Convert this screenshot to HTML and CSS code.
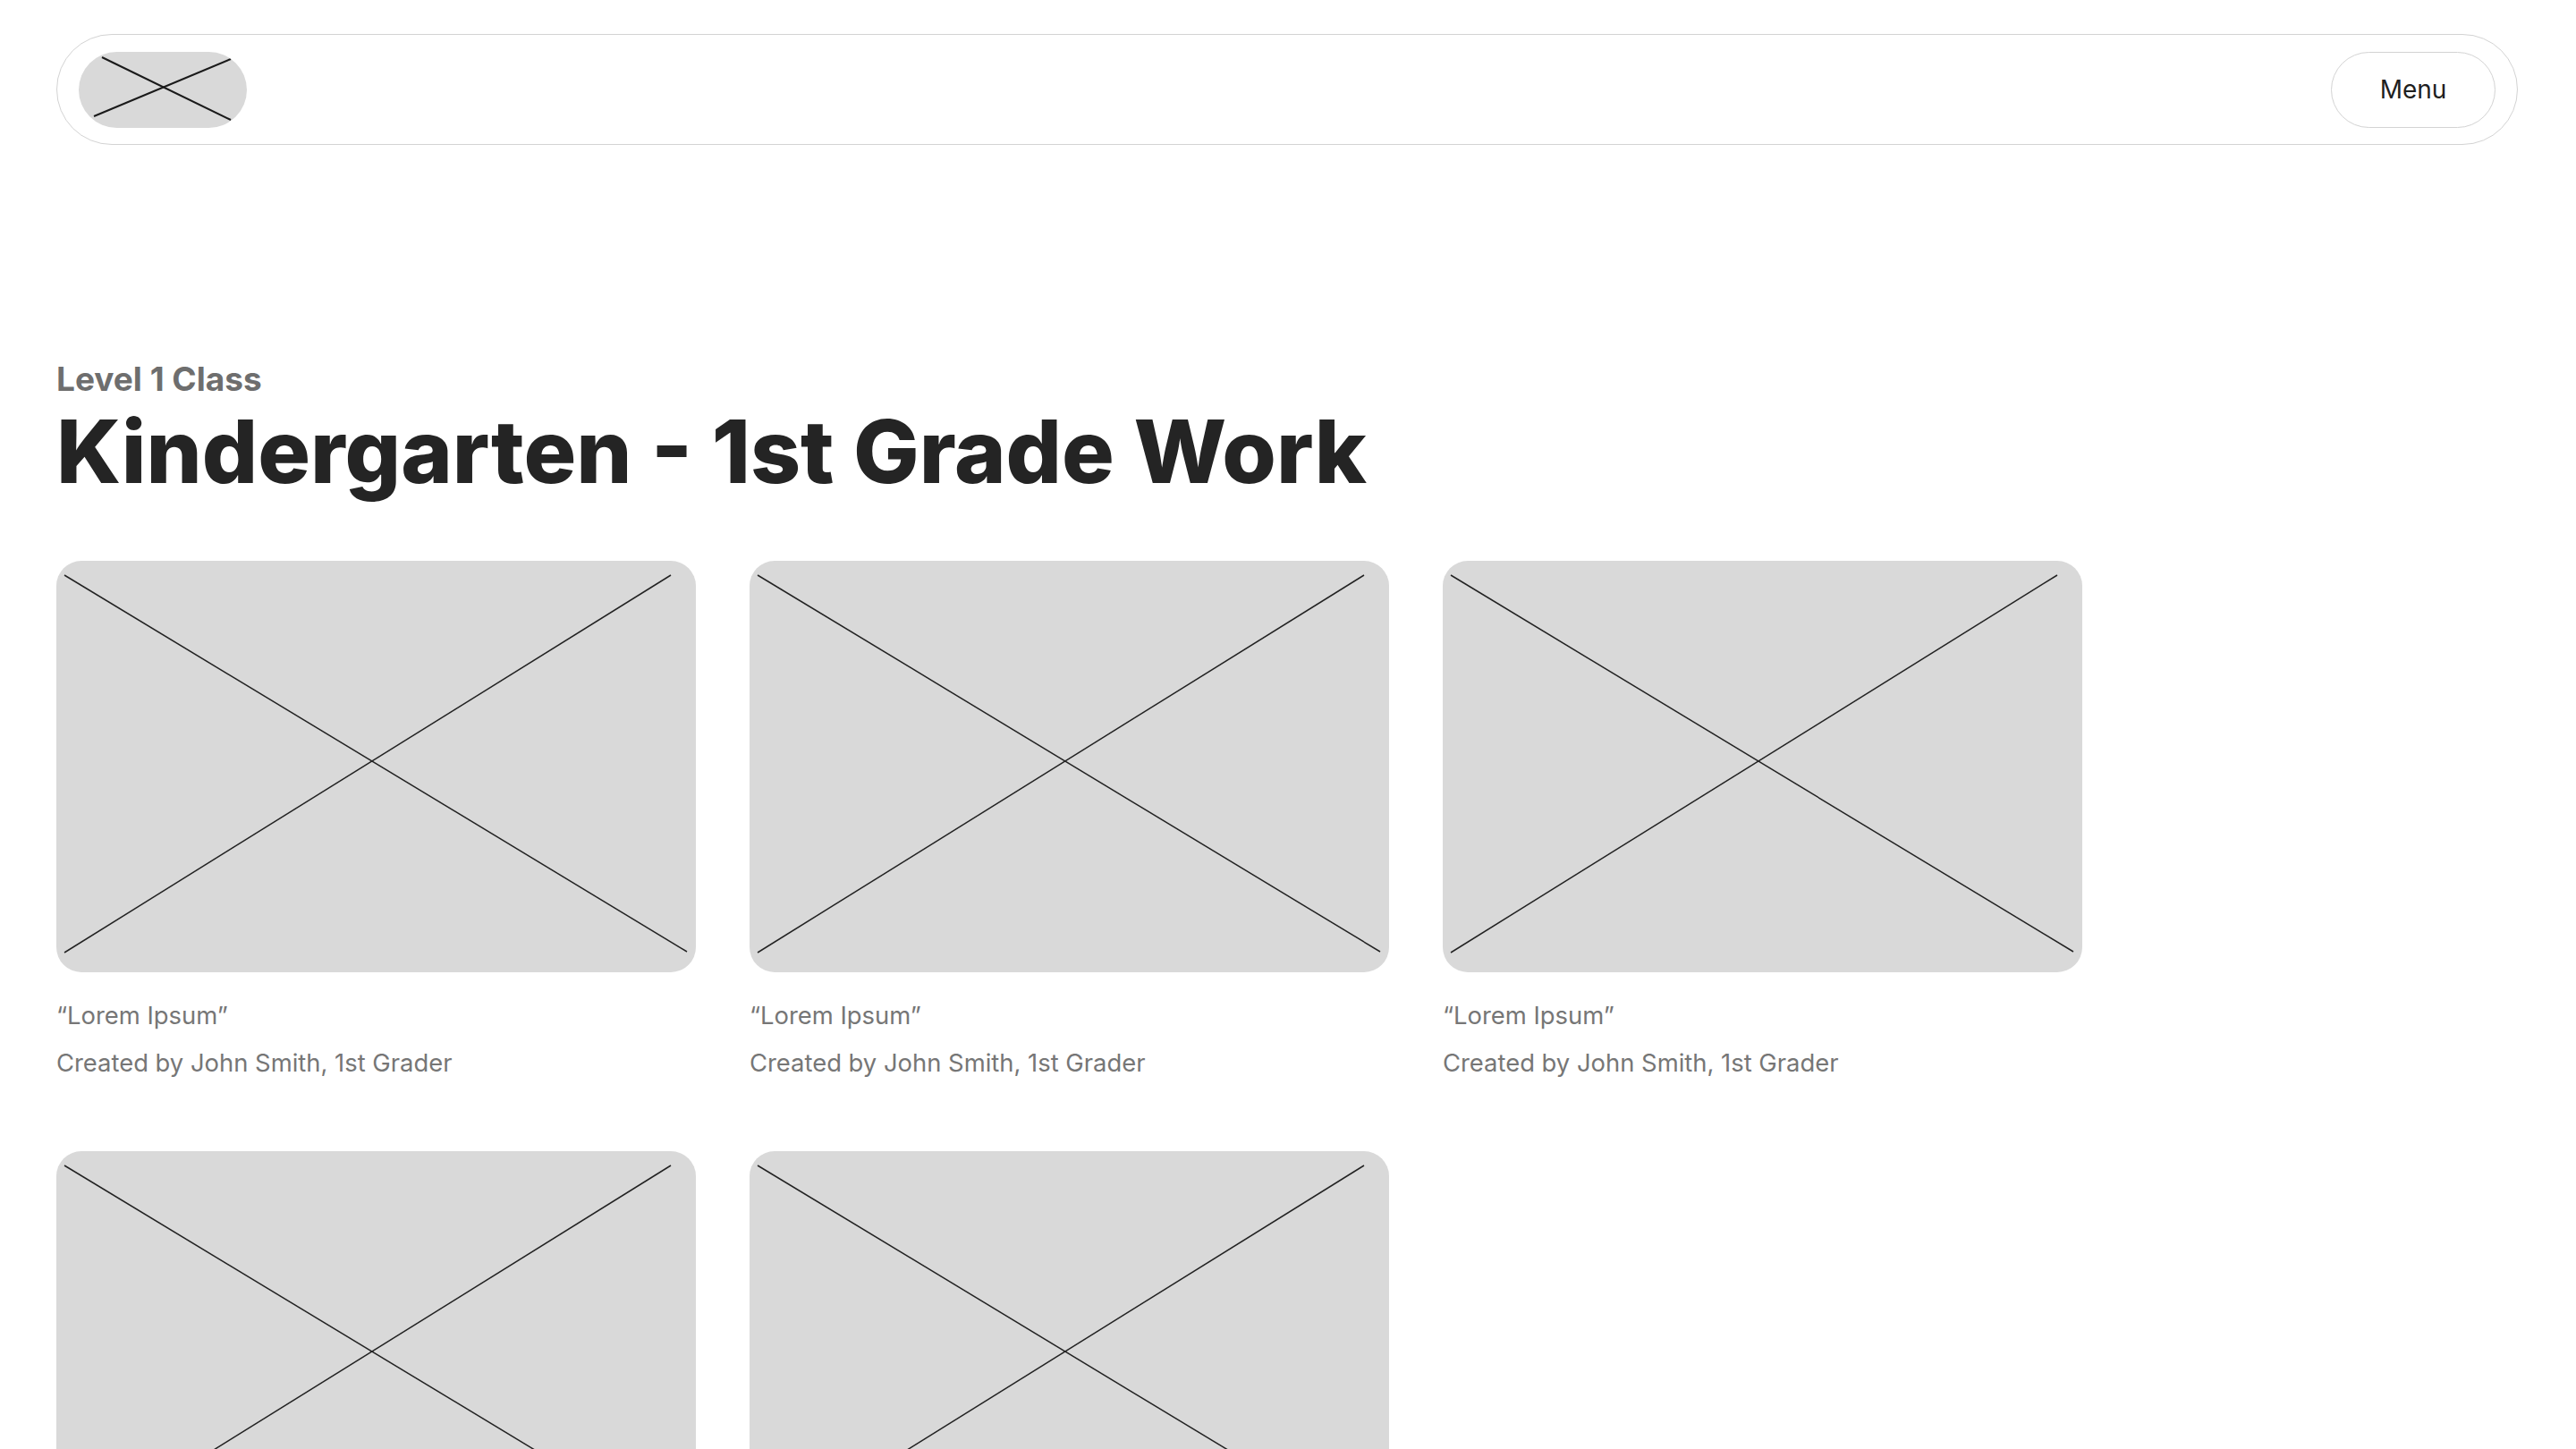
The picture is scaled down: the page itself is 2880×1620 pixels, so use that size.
FILE: index.html
```html
<!DOCTYPE html>
<html lang="en">
<head>
<meta charset="utf-8">
<title>Kindergarten - 1st Grade Work</title>
<link rel="stylesheet" href="styles.css">
</head>
<body>
<div class="page">
  <header class="topbar">
    <div class="logo">
      <svg viewBox="0 0 188 85" preserveAspectRatio="none" aria-hidden="true">
        <line x1="26" y1="6" x2="170" y2="76"/>
        <line x1="17" y1="72" x2="170" y2="8"/>
      </svg>
    </div>
    <button class="menu-btn">Menu</button>
  </header>

  <main class="content">
    <p class="eyebrow">Level 1 Class</p>
    <h1 class="title">Kindergarten - 1st Grade Work</h1>

    <section class="grid">
      <article class="card">
        <div class="thumb">
          <svg viewBox="0 0 715 460" preserveAspectRatio="none" aria-hidden="true">
            <line x1="9" y1="16" x2="705" y2="437"/>
            <line x1="687" y1="16" x2="9" y2="438"/>
          </svg>
        </div>
        <p class="caption">“Lorem Ipsum”</p>
        <p class="caption">Created by John Smith, 1st Grader</p>
      </article>
      <article class="card">
        <div class="thumb">
          <svg viewBox="0 0 715 460" preserveAspectRatio="none" aria-hidden="true">
            <line x1="9" y1="16" x2="705" y2="437"/>
            <line x1="687" y1="16" x2="9" y2="438"/>
          </svg>
        </div>
        <p class="caption">“Lorem Ipsum”</p>
        <p class="caption">Created by John Smith, 1st Grader</p>
      </article>
      <article class="card">
        <div class="thumb">
          <svg viewBox="0 0 715 460" preserveAspectRatio="none" aria-hidden="true">
            <line x1="9" y1="16" x2="705" y2="437"/>
            <line x1="687" y1="16" x2="9" y2="438"/>
          </svg>
        </div>
        <p class="caption">“Lorem Ipsum”</p>
        <p class="caption">Created by John Smith, 1st Grader</p>
      </article>
      <article class="card">
        <div class="thumb">
          <svg viewBox="0 0 715 460" preserveAspectRatio="none" aria-hidden="true">
            <line x1="9" y1="16" x2="705" y2="437"/>
            <line x1="687" y1="16" x2="9" y2="438"/>
          </svg>
        </div>
        <p class="caption">“Lorem Ipsum”</p>
        <p class="caption">Created by John Smith, 1st Grader</p>
      </article>
      <article class="card">
        <div class="thumb">
          <svg viewBox="0 0 715 460" preserveAspectRatio="none" aria-hidden="true">
            <line x1="9" y1="16" x2="705" y2="437"/>
            <line x1="687" y1="16" x2="9" y2="438"/>
          </svg>
        </div>
        <p class="caption">“Lorem Ipsum”</p>
        <p class="caption">Created by John Smith, 1st Grader</p>
      </article>
    </section>
  </main>
</div>
</body>
</html>
```

FILE: styles.css
```css
* { box-sizing: border-box; }

html, body {
  margin: 0;
  padding: 0;
  background: #ffffff;
  font-family: Inter, "Noto Sans", "Liberation Sans", sans-serif;
  color: #242424;
}

.page {
  padding: 38px 65px 0 63px;
}

.topbar {
  height: 124px;
  border: 1px solid #d3d3d3;
  border-radius: 62px;
  padding: 18px 24px 18px 24px;
  display: flex;
  align-items: center;
  justify-content: space-between;
}

.logo {
  width: 188px;
  height: 85px;
  border-radius: 43px;
  background: #d9d9d9;
  overflow: hidden;
}

.logo svg {
  display: block;
  width: 100%;
  height: 100%;
}

.logo line {
  stroke: #1a1a1a;
  stroke-width: 2;
}

.menu-btn {
  width: 184px;
  height: 85px;
  border: 1px solid #d3d3d3;
  border-radius: 43px;
  background: #ffffff;
  font-family: Inter, "Noto Sans", "Liberation Sans", sans-serif;
  font-size: 28px;
  font-weight: 400;
  color: #1f1f1f;
  padding: 0;
}

.content {
  padding-top: 241px;
}

.eyebrow {
  margin: 0;
  font-size: 37px;
  line-height: 42px;
  font-weight: 700;
  color: #6e6e6e;
  letter-spacing: 0;
}

.title {
  margin: 1px 0 0 0;
  font-size: 98px;
  line-height: 118px;
  font-weight: 800;
  letter-spacing: 0;
  color: #242424;
}

.grid {
  margin-top: 63px;
  display: grid;
  grid-template-columns: repeat(3, 715px);
  column-gap: 60px;
  row-gap: 84px;
}

.card {
  display: flex;
  flex-direction: column;
  gap: 23px;
}

.thumb {
  height: 460px;
  border-radius: 28px;
  background: #d9d9d9;
  overflow: hidden;
  margin-bottom: 10px;
}

.thumb svg {
  display: block;
  width: 100%;
  height: 100%;
}

.thumb line {
  stroke: #222222;
  stroke-width: 1.5;
}

.caption {
  margin: 0;
  font-size: 27.4px;
  line-height: 30px;
  color: #767676;
}
```
